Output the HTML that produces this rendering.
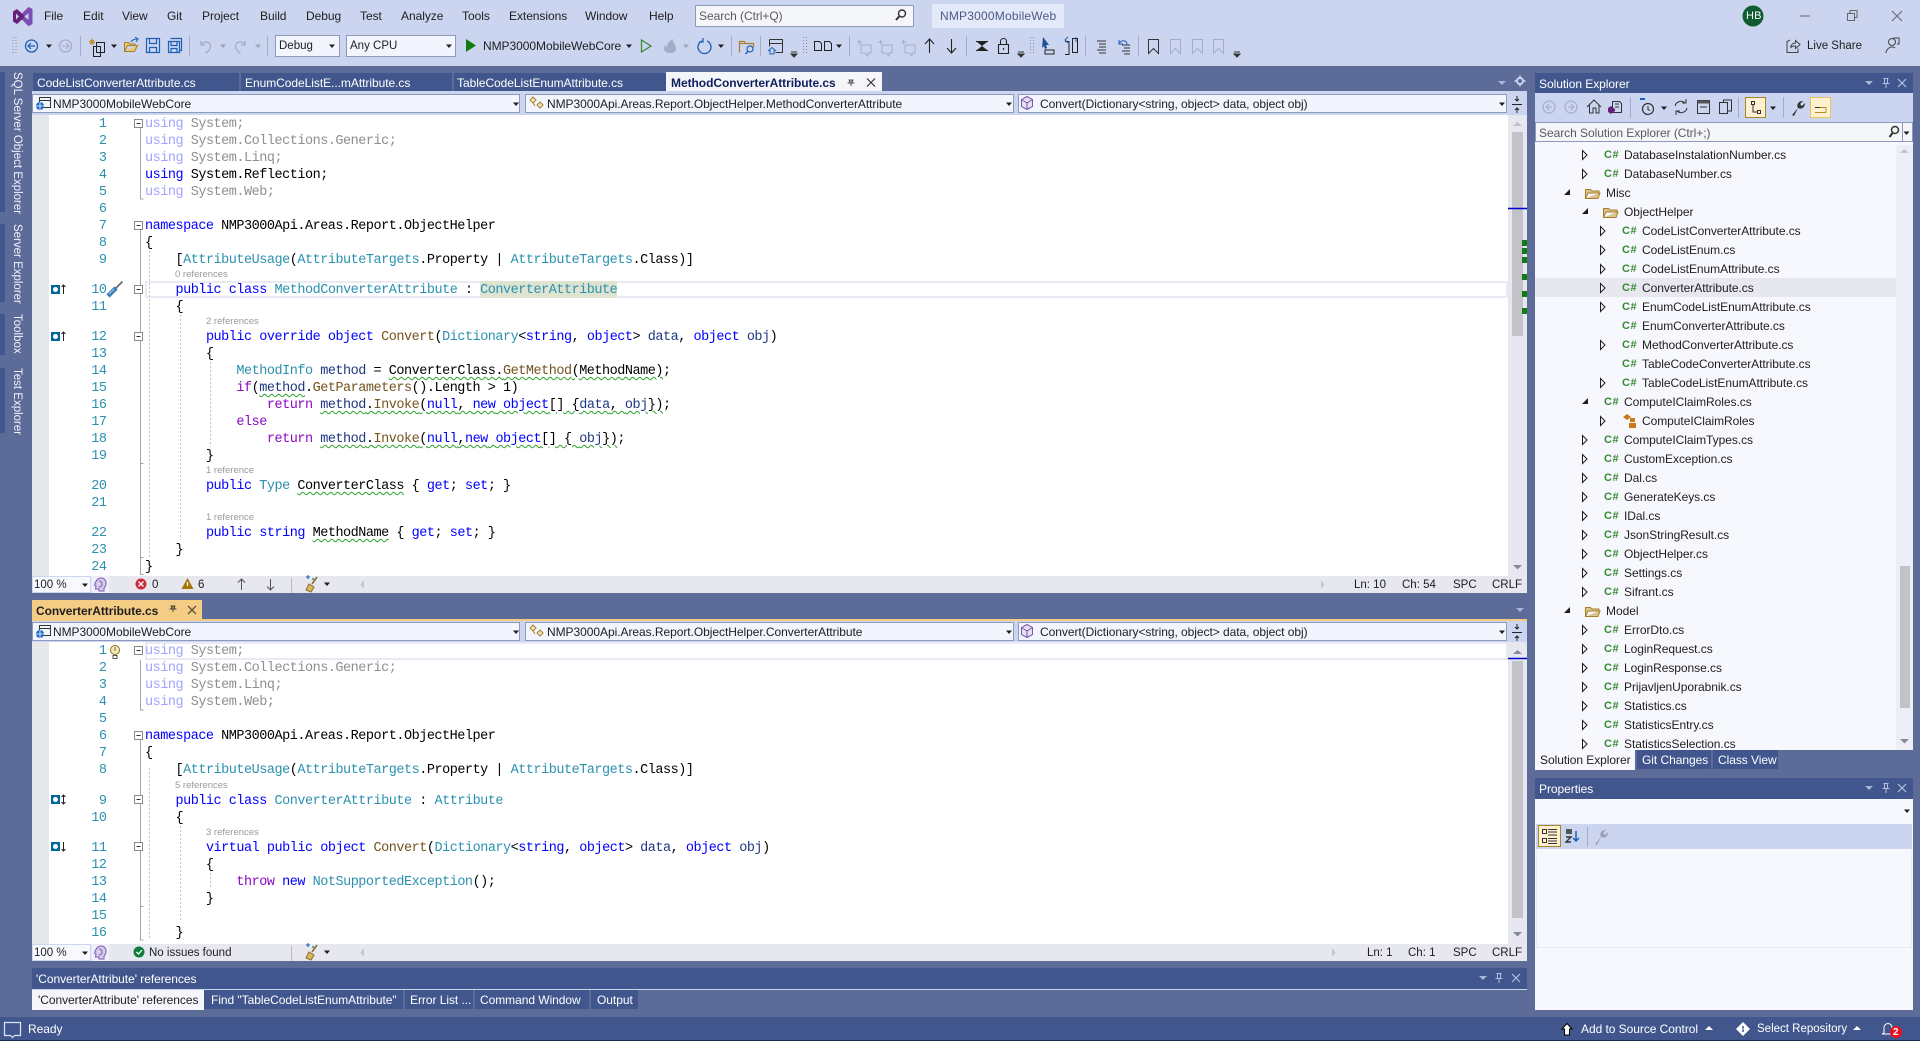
<!DOCTYPE html>
<html><head><meta charset="utf-8"><title>NMP3000MobileWeb</title>
<style>
html,body{margin:0;padding:0;width:1920px;height:1041px;overflow:hidden;background:#5d6b99}
body{position:relative;font-family:"Liberation Sans",sans-serif;font-size:12px;color:#1e1e1e}
.a,.b,.u,.c,.n,.r,.tr{position:absolute}
.a{box-sizing:border-box}
.u{white-space:pre;line-height:16px;height:16px;letter-spacing:-.05px}
.st{font-size:11.5px;letter-spacing:0}
.c,.n{font-family:"Liberation Mono",monospace;font-size:13.5px;letter-spacing:-.485px;line-height:17px;height:17px;white-space:pre;color:#000;margin-top:1px}
.c{left:145px}
.n{left:56px;width:50.5px;text-align:right;color:#2b91af}
.r{font-size:9.5px;color:#9a9a9a;white-space:pre;line-height:12px}
i{font-style:normal}
.k{color:#00f}.t{color:#2b91af}.m{color:#74531f}.p{color:#8f08c4}.v{color:#1f377f}
.fk{color:#a3a3ff}.f{color:#8f8f8f}
.s{text-decoration:underline wavy #2ea02e 1px;text-underline-offset:2px}
.tb{background:#40568d;color:#fff}
.dd{background:#f2f5fd;border:1px solid #8c9ac0}
.tr{left:0;width:378px;height:19px;white-space:pre;line-height:19px;margin-top:1px}
.cs{position:absolute;font-size:11px;font-weight:bold;color:#388a34;letter-spacing:.5px;line-height:19px}
.tx{position:absolute;letter-spacing:-.05px}
.w{color:#fff}
.sb{position:absolute;writing-mode:vertical-rl;color:#f0f2fb;white-space:pre;line-height:12px;left:11px;font-size:11.5px}
svg{position:absolute;left:0;top:0}
</style></head><body>

<!-- chrome -->
<div class="a" style="left:0;top:0;width:1920px;height:66px;background:#ccd5f0"></div>
<div class="a" style="left:695px;top:5px;width:219px;height:22px;background:#f5f6fa;border:1px solid #8c9ac0"></div>
<div class="a" style="left:932px;top:4px;width:132px;height:24px;background:#e3e9f9"></div>
<div class="a dd" style="left:275px;top:35px;width:65px;height:22px"></div>
<div class="a dd" style="left:346px;top:35px;width:110px;height:22px"></div>

<!-- left strip accents -->
<div class="a" style="left:0;top:72px;width:5px;height:140px;background:#40568d"></div>
<div class="a" style="left:0;top:224px;width:5px;height:78px;background:#40568d"></div>
<div class="a" style="left:0;top:314px;width:5px;height:41px;background:#40568d"></div>
<div class="a" style="left:0;top:368px;width:5px;height:65px;background:#40568d"></div>

<!-- doc tabs -->
<div class="a tb" style="left:33px;top:73px;width:206px;height:18px"></div>
<div class="a tb" style="left:241px;top:73px;width:211px;height:18px"></div>
<div class="a tb" style="left:454px;top:73px;width:212px;height:18px"></div>
<div class="a" style="left:666px;top:72px;width:216px;height:20px;background:#f5f6fa"></div>

<!-- pane 1 -->
<div class="a" style="left:32px;top:91px;width:1495px;height:24px;background:#ccd5f0"></div>
<div class="a dd" style="left:32px;top:94px;width:488px;height:19px"></div>
<div class="a dd" style="left:525px;top:94px;width:489px;height:19px"></div>
<div class="a dd" style="left:1018px;top:94px;width:489px;height:19px"></div>
<div class="a" style="left:32px;top:115px;width:17px;height:461px;background:#e6e7e8"></div>
<div class="a" style="left:49px;top:115px;width:1459px;height:461px;background:#fff"></div>
<div class="a" style="left:1508px;top:115px;width:19px;height:461px;background:#e6e7ef"></div>
<div class="a" style="left:1512px;top:132px;width:11px;height:204px;background:#c2c3c9"></div>
<div class="a" style="left:145px;top:281px;width:1363px;height:17px;border:2px solid #eaebf2"></div>
<div class="a" style="left:480px;top:281px;width:137px;height:17px;background:#dfe4d0"></div>
<div class="a" style="left:32px;top:576px;width:1495px;height:17px;background:#e6e7ef"></div>
<div class="a" style="left:32px;top:576px;width:59px;height:17px;background:#f8f9ff;border:1px solid #ccd5f0"></div>
<div class="a" style="left:92px;top:576px;width:17px;height:17px;background:#f0f1f8"></div>

<!-- pane 2 -->
<div class="a" style="left:32px;top:600px;width:170px;height:20px;background:#f5cc84"></div>
<div class="a" style="left:32px;top:619px;width:1495px;height:2px;background:#f5cc84"></div>
<div class="a" style="left:32px;top:621px;width:1495px;height:21px;background:#ccd5f0"></div>
<div class="a dd" style="left:32px;top:622px;width:488px;height:19px"></div>
<div class="a dd" style="left:525px;top:622px;width:489px;height:19px"></div>
<div class="a dd" style="left:1018px;top:622px;width:489px;height:19px"></div>
<div class="a" style="left:32px;top:642px;width:17px;height:302px;background:#e6e7e8"></div>
<div class="a" style="left:49px;top:642px;width:1459px;height:302px;background:#fff"></div>
<div class="a" style="left:1508px;top:642px;width:19px;height:302px;background:#e6e7ef"></div>
<div class="a" style="left:1512px;top:661px;width:11px;height:257px;background:#c2c3c9"></div>
<div class="a" style="left:145px;top:642px;width:1363px;height:18px;border:2px solid #eaebf2"></div>
<div class="a" style="left:32px;top:944px;width:1495px;height:17px;background:#e6e7ef"></div>
<div class="a" style="left:32px;top:944px;width:59px;height:17px;background:#f8f9ff;border:1px solid #ccd5f0"></div>
<div class="a" style="left:92px;top:944px;width:17px;height:17px;background:#f0f1f8"></div>

<!-- bottom tool window -->
<div class="a tb" style="left:32px;top:968px;width:1495px;height:21px"></div>
<div class="a" style="left:32px;top:989px;width:1495px;height:1px;background:#ccd5f0"></div>
<div class="a" style="left:32px;top:990px;width:172px;height:20px;background:#f5f6fa"></div>
<div class="a tb" style="left:204px;top:990px;width:199px;height:19px"></div>
<div class="a tb" style="left:405px;top:990px;width:68px;height:19px"></div>
<div class="a tb" style="left:475px;top:990px;width:114px;height:19px"></div>
<div class="a tb" style="left:591px;top:990px;width:47px;height:19px"></div>

<!-- status bar -->
<div class="a" style="left:0;top:1017px;width:1920px;height:24px;background:#40568d"></div>
<div class="a" style="left:0;top:1040px;width:1920px;height:1px;background:#1d2a4d"></div>

<!-- solution explorer -->
<div class="a tb" style="left:1535px;top:73px;width:378px;height:20px"></div>
<div class="a" style="left:1535px;top:93px;width:378px;height:29px;background:#ccd5f0"></div>
<div class="a" style="left:1535px;top:122px;width:378px;height:20px;background:#f5f6fa;border:1px solid #8c9ac0"></div>
<div class="a" style="left:1535px;top:142px;width:378px;height:608px;background:#f7f8fe"></div>
<div class="a" style="left:1896px;top:145px;width:17px;height:605px;background:#eeeff6"></div>
<div class="a" style="left:1900px;top:566px;width:10px;height:142px;background:#c2c3c9"></div>
<div class="a" style="left:1535px;top:278px;width:361px;height:19px;background:#e6e7ef"></div>
<div class="a" style="left:1745px;top:97px;width:21px;height:21px;background:#fff0d0;border:1px solid #a8842c"></div>
<div class="a" style="left:1810px;top:97px;width:21px;height:21px;background:#fff0d0;border:1px solid #e5c365"></div>
<div class="a" style="left:1535px;top:750px;width:100px;height:20px;background:#f7f8fe"></div>
<div class="a tb" style="left:1637px;top:750px;width:74px;height:19px"></div>
<div class="a tb" style="left:1713px;top:750px;width:65px;height:19px"></div>

<!-- properties -->
<div class="a tb" style="left:1535px;top:778px;width:378px;height:21px"></div>
<div class="a" style="left:1535px;top:799px;width:378px;height:211px;background:#f7f8fe"></div>
<div class="a" style="left:1536px;top:824px;width:376px;height:25px;background:#ccd5f0"></div>
<div class="a" style="left:1536px;top:849px;width:376px;height:99px;border:1px solid #ecedf3;border-top:0"></div>
<div class="a" style="left:1538px;top:825px;width:23px;height:22px;background:#fff0d0;border:1px solid #a8842c"></div>

<svg width="1920" height="1041" viewBox="0 0 1920 1041" fill="none">
<defs>
<symbol id="ca" overflow="visible"><path d="M-3-1.5h6L0 2z" fill="#1e1e1e"/></symbol>
<symbol id="cg" overflow="visible"><path d="M-3-1.5h6L0 2z" fill="#9aa3bc"/></symbol>
<symbol id="cw" overflow="visible"><path d="M-4-2h8L0 2z" fill="#aab6d8"/></symbol>
<symbol id="ex" overflow="visible"><path d="M-1.5 .5 L3 5 L-1.5 9.5Z" fill="#f7f8fe" stroke="#1e1e1e"/></symbol>
<symbol id="ed" overflow="visible"><path d="M6 0 V6 H0Z" fill="#1e1e1e"/></symbol>
<symbol id="fo" overflow="visible"><path d="M.5 11.5V2.5h5l1.5 1.5h7v2M.5 11.5h12.5l2-5.5H3z" fill="#dcc58c" stroke="#a87f28"/></symbol>
<symbol id="bx" overflow="visible"><rect x=".5" y=".5" width="8" height="8" fill="#fff" stroke="#8a8a8a"/><path d="M2.5 4.5h4" stroke="#333"/></symbol>
<symbol id="pin" overflow="visible"><path d="M-2.5-4.5h5M-1.5-4.5v5h3v-5M-3.5.5h7M0 .5v4.5" stroke="#b5c0de"/></symbol>
<symbol id="x" overflow="visible"><path d="M-4-4l8 8M4-4l-8 8" stroke="#b5c0de" stroke-width="1.2"/></symbol>
<symbol id="com" overflow="visible"><path d="M1 4h5M3.500 1.500v5M5 7h10v8h-3v3l-3-3H5z" stroke="#a3adc8"/></symbol>
<symbol id="bm" overflow="visible"><path d="M.5.5h10v14l-5-5-5 5z" stroke="#a3adc8"/></symbol>
<symbol id="hd" overflow="visible"><path d="M-1 7V5h-3.500l.5-3-1.500-1C-4-4-2-6 1-6c3 0 5 2 5 5 0 3-1 4-2 5v3z" fill="#d8ccec" stroke="#7a5bb0"/><path d="M-1-3c2 0 3 1 3 3s-1 3-3 3" stroke="#7a5bb0"/></symbol>
<symbol id="br" overflow="visible"><path d="M11 0L6 7" stroke="#8a6d2a" stroke-width="1.600"/><path d="M3 7l5 3-3 5-5-2z" fill="#d8b860" stroke="#8a6d2a"/><path d="M0 0h4M2-2v4" stroke="#1c5fb4"/><path d="M6 2h2M7 1v2" stroke="#1c5fb4" stroke-width=".8"/></symbol>
</defs>

<!-- logo -->
<path d="M13 11.5 17 9l5 4.5L28.5 7l4 2v15l-4 2L22 19.5 17 24l-4-2.5z" fill="#68217a"/>
<path d="M16 13.5v6l3-3zM24.5 16.5l4 3.2v-6.4z" fill="#ccd5f0"/>
<path d="M22 13.5 28.5 7l4 2v15l-4 2-6.5-6.5 2.5-3z" fill="#865fc5" opacity=".75"/>
<path d="M24.5 16.5l4 3.2v-6.4z" fill="#ccd5f0"/>
<!-- search -->
<circle cx="902" cy="13.5" r="3.5" stroke="#333" stroke-width="1.4"/><path d="M899.5 16l-3.5 4" stroke="#333" stroke-width="2"/>
<!-- toolbar -->
<path d="M13 37v17M16 37v17" stroke="#7f8aa8" stroke-dasharray="1 2"/>
<circle cx="31.5" cy="46" r="6" stroke="#1c5fb4" stroke-width="1.3"/><path d="M35 46h-7M31 43l-3 3 3 3" stroke="#1c5fb4" stroke-width="1.2"/>
<use href="#ca" x="49" y="46"/>
<circle cx="65.5" cy="46" r="6" stroke="#a3adc8" stroke-width="1.3"/><path d="M62 46h7M66 43l3 3-3 3" stroke="#a3adc8"/>
<path d="M80.5 36v20M189.5 36v20M267.5 36v20M731.5 36v20M760.5 36v20M849.5 36v20M966.5 36v20M1085.5 36v20M1138.5 36v20" stroke="#a3adc8"/>
<path d="M90 40l4 4M94 40l-4 4M92 38.5v6.5M89 42h6" stroke="#b98a22"/>
<path d="M96.5 42.5h8v10h-8zM93.5 46.5h7v10h-7z" stroke="#222" />
<use href="#ca" x="114" y="46"/>
<path d="M124.5 51.5v-9h4l1.5 1.5h5v2M124.5 51.5h10l3-6h-10z" fill="#e8c878" stroke="#a87f28"/><path d="M131 42c2-3 4-3 7-3M135 37l3 2-2 3" stroke="#1c5fb4"/>
<path d="M146.5 38.5h13v14h-13zM149.5 38.5v5h7v-5M149.5 52.5v-5h7v5" stroke="#1c5fb4" stroke-width="1.2"/>
<path d="M170.5 38.5h11v12h-2M168.5 41.5h11v11h-11zM171 41.5v4h6v-4M171 52.5v-4h6v4" stroke="#1c5fb4" stroke-width="1.2"/>
<path d="M201 41v4h4M201.5 44.5c3-4 9-3 9 2 0 3-2 4-5 7" stroke="#a3adc8" stroke-width="1.3"/><use href="#cg" x="223" y="46"/>
<path d="M245 41v4h-4M244.5 44.5c-3-4-9-3-9 2 0 3 2 4 5 7" stroke="#a3adc8" stroke-width="1.3"/><use href="#cg" x="258" y="46"/>
<use href="#ca" x="332" y="46"/><use href="#ca" x="449" y="46"/>
<path d="M466 39l10 6.5-10 6.5z" fill="#107c10"/>
<use href="#ca" x="629" y="46"/>
<path d="M641.5 40l9.5 6-9.5 6z" stroke="#388a34" stroke-width="1.3"/>
<path d="M668 53c-4-1-5-5-3-8 1 1 1 2 2 2 0-3 2-6 6-8-1 3 3 5 3 9 0 3-2 5-4 5z" fill="#a3adc8"/>
<use href="#cg" x="686" y="46"/>
<path d="M702 41a6.5 6.5 0 1 0 5 0M703 38v4h-4" stroke="#1c5fb4" stroke-width="1.3"/>
<use href="#ca" x="721" y="46"/>
<path d="M739.5 52.5v-11h5l1 2h8v4" stroke="#a87f28" stroke-width="1.2"/><path d="M739.5 43.5h13" stroke="#a87f28"/><circle cx="750" cy="49" r="3" stroke="#1c5fb4" stroke-width="1.2"/><path d="M748 51.5l-2.5 2.5" stroke="#1c5fb4" stroke-width="1.4"/>
<path d="M769.5 39.5h13v13h-7M769.5 39.5v7M769.5 43.5h13" stroke="#333"/><path d="M768 51l4-3.5 4 3.5M770 50v4h4v-4" stroke="#1c5fb4"/>
<path d="M791 52h6M791 54l3 3 3-3z" stroke="#333" fill="#333"/>
<path d="M803.5 37v17M806.5 37v17" stroke="#7f8aa8" stroke-dasharray="1 2"/>
<path d="M814.5 41.5h5l2 2v7h-7zM824.5 41.5h5l2 2v7h-7z" stroke="#222"/>
<use href="#ca" x="839" y="46"/>
<use href="#com" x="856" y="38"/><use href="#com" x="877" y="38"/><use href="#com" x="900" y="38"/>
<path d="M929.5 53V39M925 44l4.500-5 4.500 5M951.500 39v14M947 48l4.500 5 4.500-5" stroke="#222" stroke-width="1.1"/>
<path d="M976 41.500h12M976 50.500h12" stroke="#222"/><path d="M977 42l5 4 5-4zM977 50l5-4 5 4z" fill="#222"/>
<path d="M998.500 44.500h10v9h-10zM1000.500 44.500v-3c0-4 6-4 6 0v3M1003.500 48v2" stroke="#222" stroke-width="1.1"/>
<path d="M1018 52h6M1018 54l3 3 3-3z" stroke="#333" fill="#333"/>
<path d="M1030.500 37v17M1033.500 37v17" stroke="#7f8aa8" stroke-dasharray="1 2"/>
<path d="M1043 37l6 8h-3l1 3-2 1-1-3-2 2z" fill="#1c4f94"/><path d="M1045 50h9v4h-9z" stroke="#222"/>
<path d="M1065 41.500h4v13h-4M1072.500 38.500h5v14h-5z" stroke="#222"/><path d="M1068 37l-3 3 3 3M1076 37v5" stroke="#1c5fb4"/>
<path d="M1097 41h9M1099 44h7M1099 47h7M1097 50h9M1099 53h7" stroke="#333"/>
<path d="M1122 45h8M1124 48h6M1122 51h8M1124 54h6" stroke="#333"/><path d="M1119 40v4h4M1119.500 43c3-4 9-2 7 2" stroke="#1c5fb4"/>
<path d="M1148.500 39.500h10v14l-5-5-5 5z" stroke="#333"/>
<use href="#bm" x="1170" y="39"/><use href="#bm" x="1192" y="39"/><use href="#bm" x="1213" y="39"/>
<path d="M1234 52h6M1234 54l3 3 3-3z" stroke="#333" fill="#333"/>
<circle cx="1753" cy="16" r="10.500" fill="#0e5c2f"/>
<path d="M1800 16h10" stroke="#666"/>
<path d="M1847.500 13.500h7v7h-7zM1850 13v-2.500h7v7h-2.500" stroke="#666"/>
<path d="M1892 11l10 10M1902 11l-10 10" stroke="#666"/>
<path d="M1790 40l-3 1.500v11h11v-4M1790.500 47c1-3 3-4 5-4v-2.500l4.500 4-4.500 4v-2.500c-2 0-4 0-5 2" stroke="#444"/>
<circle cx="1892" cy="42" r="3.500" stroke="#444"/><path d="M1886 53c0-3 3-6 6-6 1 0 2 0 3 1M1893 38h6v6h-2" stroke="#444"/>
<!-- doc tab decorations -->
<path d="M851 80v5M848.500 80h5M849.500 80v3h3v-3M847.500 83h7M851 83v3" stroke="#555"/>
<path d="M867 78.500l8 8M875 78.500l-8 8" stroke="#333" stroke-width="1.200"/>
<use href="#cw" x="1502" y="83"/>
<circle cx="1520" cy="81" r="3" stroke="#ccd5f0" stroke-width="2"/><path d="M1520 75.500v2M1520 84.500v2M1514.500 81h2M1523.500 81h2" stroke="#ccd5f0" stroke-width="1.400"/>
<!-- dropdown icons pane 1 -->
<path d="M39.500 97.500h11v10h-11zM39.500 100.500h11" stroke="#333"/><circle cx="40" cy="106" r="4" fill="#1c6cc4"/><path d="M36 106h8M40 102v8" stroke="#fff" stroke-width=".8"/>
<path d="M530 100l3-3 3 3-3 3zM537 105l3-3 3 3-3 3zM533 103l2 3" stroke="#a87f28" fill="#f2e4c2"/>
<path d="M1027 96.500l5.500 3v7l-5.500 3-5.500-3v-7zM1027 103v6.500M1027 103l5.500-3.500M1027 103l-5.500-3.500" stroke="#7656a8" fill="#e8e0f5"/>
<use href="#ca" x="516" y="104"/><use href="#ca" x="1009" y="104"/><use href="#ca" x="1502" y="104"/>
<path d="M1512 104.500h10M1517 96v5M1515 99l2 2 2-2M1517 113v-5M1515 110l2-2 2 2" stroke="#222"/>
<!-- dropdown icons pane 2 -->
<path d="M39.500 625.500h11v10h-11zM39.500 628.500h11" stroke="#333"/><circle cx="40" cy="634" r="4" fill="#1c6cc4"/><path d="M36 634h8M40 630v8" stroke="#fff" stroke-width=".8"/>
<path d="M530 628l3-3 3 3-3 3zM537 633l3-3 3 3-3 3zM533 631l2 3" stroke="#a87f28" fill="#f2e4c2"/>
<path d="M1027 624.500l5.500 3v7l-5.500 3-5.500-3v-7zM1027 631v6.500M1027 631l5.500-3.500M1027 631l-5.500-3.500" stroke="#7656a8" fill="#e8e0f5"/>
<use href="#ca" x="516" y="632"/><use href="#ca" x="1009" y="632"/><use href="#ca" x="1502" y="632"/>
<path d="M1512 632.500h10M1517 624v5M1515 627l2 2 2-2M1517 641v-5M1515 638l2-2 2 2" stroke="#222"/>
<path d="M173 606v5M170.500 606h5M171.500 606v3h3v-3M169.500 609h7M173 609v3" stroke="#443"/>
<path d="M188 606l8 8M196 606l-8 8" stroke="#443" stroke-width="1.200"/>
<use href="#cw" x="1520" y="610"/>

<!-- pane1 outline -->
<path d="M140.500 128v71h3M140.500 230v345M140.500 463.500h3M140.500 557.500h3M140.500 574.500h3" stroke="#a5a5a5"/>
<path d="M149.500 251v306M180.500 315v225M210.500 362v85" stroke="#c5c5c5" stroke-dasharray="2 2"/>
<use href="#bx" x="134" y="119"/><use href="#bx" x="134" y="221"/><use href="#bx" x="134" y="285"/><use href="#bx" x="134" y="332"/>
<!-- pane1 glyphs -->
<rect x="51" y="285" width="9" height="9" fill="#00699b"/><circle cx="55.500" cy="289.500" r="2.500" fill="#fff"/><path d="M63.500 294v-9M61.500 287l2-2 2 2" stroke="#222"/>
<rect x="51" y="332" width="9" height="9" fill="#00699b"/><circle cx="55.500" cy="336.500" r="2.500" fill="#fff"/><path d="M63.500 341v-9M61.500 334l2-2 2 2" stroke="#222"/>
<path d="M115 289l7.500-7.500" stroke="#666" stroke-width="1.600"/><path d="M108 296l8-8" stroke="#3f7eb6" stroke-width="4.500"/><path d="M109 294l5-5" stroke="#a7cbe6"/>
<!-- scrollbar pane 1 -->
<path d="M1513 126l4.500-4 4.500 4z" fill="#c2c3c9"/><path d="M1513 565l4.500 4.500 4.500-4.500z" fill="#868999"/>
<path d="M1508 208.500h19" stroke="#00c" stroke-width="1.500"/>
<path d="M1522 240h5v6h-5zM1522 248h5v6h-5zM1522 257h5v6h-5zM1522 274h5v6h-5zM1522 291h5v6h-5zM1522 308h5v6h-5z" fill="#107c10"/>
<!-- pane1 statusbar -->
<use href="#ca" x="85" y="585"/>
<use href="#hd" x="100" y="584"/>
<circle cx="141" cy="584" r="5.500" fill="#d0283a"/><path d="M138.500 581.500l5 5M143.500 581.500l-5 5" stroke="#fff" stroke-width="1.300"/>
<path d="M187.500 578l6 11h-12z" fill="#a87408"/><path d="M187.500 582v4" stroke="#fff" stroke-width="1.300"/>
<path d="M241.500 590v-11M238 582.500l3.500-3.500 3.500 3.500M270.500 579v11M267 586.500l3.500 3.500 3.500-3.500" stroke="#555"/>
<path d="M291.500 578v15" stroke="#bbb"/>
<use href="#br" x="306" y="577"/>
<use href="#ca" x="327" y="584"/>
<path d="M364 580l-3.500 4.500 3.500 4.500z" fill="#c4c6d0"/><path d="M1321 580l3.500 4.500-3.500 4.500z" fill="#c4c6d0"/>

<!-- pane2 outline -->
<path d="M140.500 660v50h3M140.500 740v200h3M140.500 906.500h3" stroke="#a5a5a5"/>
<path d="M149.500 768v172M180.500 826v96M210.500 873v16" stroke="#c5c5c5" stroke-dasharray="2 2"/>
<use href="#bx" x="134" y="646"/><use href="#bx" x="134" y="731"/><use href="#bx" x="134" y="795"/><use href="#bx" x="134" y="842"/>
<rect x="51" y="795" width="9" height="9" fill="#00699b"/><circle cx="55.500" cy="799.500" r="2.500" fill="#fff"/><path d="M63.500 795v9M61.500 797l2-2 2 2M61.500 802l2 2 2-2" stroke="#222"/>
<rect x="51" y="842" width="9" height="9" fill="#00699b"/><circle cx="55.500" cy="846.500" r="2.500" fill="#fff"/><path d="M63.500 842v9M61.500 849l2 2 2-2" stroke="#222"/>
<circle cx="115" cy="650" r="4.500" fill="#f4e7bd" stroke="#8a7320"/><path d="M113 655.500h4v3h-4z" stroke="#555"/><path d="M115 647v4" stroke="#8a7320"/>
<path d="M1513 654l4.500-4 4.500 4z" fill="#868999"/><path d="M1513 932l4.500 4.500 4.500-4.500z" fill="#868999"/>
<path d="M1508 658.500h19" stroke="#00c" stroke-width="1.500"/>
<use href="#ca" x="85" y="953"/>
<use href="#hd" x="100" y="952"/>
<circle cx="139" cy="952" r="5.500" fill="#107c3c"/><path d="M136.500 952l2 2 3.500-4" stroke="#fff" stroke-width="1.300"/>
<path d="M291.500 946v15" stroke="#bbb"/>
<use href="#br" x="306" y="945"/>
<use href="#ca" x="327" y="952"/>
<path d="M364 948l-3.500 4.500 3.500 4.500z" fill="#c4c6d0"/><path d="M1332 948l3.500 4.500-3.500 4.500z" fill="#c4c6d0"/>

<!-- bottom window buttons -->
<use href="#cw" x="1483" y="978"/><use href="#pin" x="1499" y="978"/><use href="#x" x="1516" y="978"/>

<!-- status bar icons -->
<path d="M4.500 1022.500h16v13h-6l-2 2-2-2h-6z" stroke="#dfe4f5" stroke-width="1.200"/>
<path d="M1567 1023.500l5 5.500h-2.500v6h-5v-6H1562z" fill="#fff" stroke="#000"/>
<path d="M1743 1022l7 7-7 7-7-7z" fill="#fff"/><circle cx="1743" cy="1027" r="1" fill="#40568d"/><circle cx="1743" cy="1031" r="1" fill="#40568d"/><path d="M1743 1027v4" stroke="#40568d"/>
<path d="M1705 1030h8l-4-4zM1853 1030h8l-4-4z" fill="#fff"/>
<path d="M1884 1033v-5c0-6 8-6 8 0v5l2 1h-12z" stroke="#fff"/><circle cx="1896" cy="1032" r="6" fill="#e81123"/>

<!-- SE title -->
<use href="#cw" x="1869" y="83"/><use href="#pin" x="1886" y="83"/><use href="#x" x="1902" y="83"/>
<circle cx="1549" cy="107" r="6" stroke="#a3adc8" stroke-width="1.200"/><path d="M1552 107h-6M1549 104l-3 3 3 3" stroke="#a3adc8"/>
<circle cx="1571" cy="107" r="6" stroke="#a3adc8" stroke-width="1.200"/><path d="M1568 107h6M1571 104l3 3-3 3" stroke="#a3adc8"/>
<path d="M1587 107l7-7 7 7M1589.500 105v8h3.500v-5h3v5h3v-8" stroke="#333"/>
<path d="M1612.500 101.500h7l2 2v9h-9z" stroke="#333"/><path d="M1615 104h4M1615 107h4" stroke="#333"/><path d="M1608 108l3-2 4 3v2l-4 3-3-2z" fill="#68217a"/>
<path d="M1630.500 97v21M1738.500 97v21M1783.500 97v21" stroke="#a3adc8"/>
<circle cx="1648" cy="109" r="5.500" stroke="#333" stroke-width="1.200"/><path d="M1648 106v3.500l2 1" stroke="#333"/><path d="M1640 98h5v2h-5z" fill="#1c5fb4"/>
<use href="#ca" x="1664" y="108"/>
<path d="M1675 106a6 6 0 0 1 10-3M1687 108a6 6 0 0 1-10 3M1686 99v4h-4M1676 115v-4h4" stroke="#333"/>
<path d="M1697.500 100.500h12v13h-12zM1700 107h7" stroke="#333"/><path d="M1697.500 100.500h12v3h-12z" fill="#555"/>
<path d="M1719.500 102.500h8v11h-8zM1723.500 102.500v-2.500h8v11h-4" stroke="#333"/>
<path d="M1751.500 101.500h3v3h-3zM1757.500 110.500h3v3h-3zM1753 105v7h4" stroke="#333"/>
<use href="#ca" x="1773" y="108"/>
<path d="M1792 115l6-7c-2-4 1-7 5-7l-3 3 2 2 3-3c0 4-3 7-7 5l-4 8z" fill="#333"/>
<path d="M1815 112.500h11M1826 112.500v-5h-6" stroke="#b98a22"/><path d="M1815 107.500h5" stroke="#333"/>
<circle cx="1895" cy="130" r="3.500" stroke="#333" stroke-width="1.500"/><path d="M1892.500 133l-3 4" stroke="#333" stroke-width="2"/>
<path d="M1902.500 122v20" stroke="#8c9ac0"/><use href="#ca" x="1906.500" y="133"/>
<path d="M1900 153l4.500-4 4.500 4z" fill="#c2c3c9"/><path d="M1900 739l4.500 4.500 4.500-4.500z" fill="#868999"/>

<!-- Properties -->
<use href="#cw" x="1869" y="788"/><use href="#pin" x="1886" y="788"/><use href="#x" x="1902" y="788"/>
<use href="#ca" x="1907" y="811"/>
<path d="M1542.500 829.500h4v4h-4zM1542.500 838.500h4v4h-4zM1548 829.500h9M1548 832h9M1548 835h9M1548 838.500h9M1548 841h9M1548 843.500h9" stroke="#333"/>
<path d="M1566 829h6v5h-6z" fill="#555"/><path d="M1566 837h5l-5 5h5" stroke="#333" stroke-width="1.400"/>
<path d="M1576 831v10M1573 838l3 3 3-3" stroke="#1c5fb4" stroke-width="1.500"/>
<path d="M1587.500 827v20" stroke="#a3adc8"/>
<path d="M1595 844l6-7c-2-4 1-7 5-7l-3 3 2 2 3-3c0 4-3 7-7 5l-4 8z" fill="#9aa0b4"/>
</svg>

<!-- menu -->
<div class="u" style="left:44px;top:8px">File</div>
<div class="u" style="left:83px;top:8px">Edit</div>
<div class="u" style="left:122px;top:8px">View</div>
<div class="u" style="left:167px;top:8px">Git</div>
<div class="u" style="left:202px;top:8px">Project</div>
<div class="u" style="left:260px;top:8px">Build</div>
<div class="u" style="left:306px;top:8px">Debug</div>
<div class="u" style="left:360px;top:8px">Test</div>
<div class="u" style="left:401px;top:8px">Analyze</div>
<div class="u" style="left:462px;top:8px">Tools</div>
<div class="u" style="left:509px;top:8px">Extensions</div>
<div class="u" style="left:585px;top:8px">Window</div>
<div class="u" style="left:649px;top:8px">Help</div>
<div class="u" style="left:699px;top:8px;color:#5a5a5a">Search (Ctrl+Q)</div>
<div class="u" style="left:940px;top:8px;color:#4d5a80;letter-spacing:.2px">NMP3000MobileWeb</div>
<div class="u" style="left:1746px;top:8px;color:#fff;font-size:11px;letter-spacing:.2px">HB</div>
<div class="u st" style="left:279px;top:38px">Debug</div>
<div class="u st" style="left:350px;top:38px">Any CPU</div>
<div class="u" style="left:483px;top:38px">NMP3000MobileWebCore</div>
<div class="u st" style="left:1807px;top:38px">Live Share</div>

<!-- left strip -->
<div class="sb" style="top:72px">SQL Server Object Explorer</div>
<div class="sb" style="top:224px">Server Explorer</div>
<div class="sb" style="top:314px">Toolbox</div>
<div class="sb" style="top:368px">Test Explorer</div>

<!-- tabs -->
<div class="u w" style="left:37px;top:75px">CodeListConverterAttribute.cs</div>
<div class="u w" style="left:245px;top:75px">EnumCodeListE...mAttribute.cs</div>
<div class="u w" style="left:457px;top:75px">TableCodeListEnumAttribute.cs</div>
<div class="u" style="left:671px;top:75px;font-weight:bold;color:#0e1f5e">MethodConverterAttribute.cs</div>
<div class="u" style="left:53px;top:96px">NMP3000MobileWebCore</div>
<div class="u" style="left:547px;top:96px">NMP3000Api.Areas.Report.ObjectHelper.MethodConverterAttribute</div>
<div class="u" style="left:1040px;top:96px">Convert(Dictionary&lt;string, object&gt; data, object obj)</div>
<div class="u" style="left:36px;top:603px;font-weight:bold">ConverterAttribute.cs</div>
<div class="u" style="left:53px;top:624px">NMP3000MobileWebCore</div>
<div class="u" style="left:547px;top:624px">NMP3000Api.Areas.Report.ObjectHelper.ConverterAttribute</div>
<div class="u" style="left:1040px;top:624px">Convert(Dictionary&lt;string, object&gt; data, object obj)</div>

<!-- pane 1 line numbers -->
<div class="n" style="top:115px">1</div><div class="n" style="top:132px">2</div><div class="n" style="top:149px">3</div><div class="n" style="top:166px">4</div><div class="n" style="top:183px">5</div><div class="n" style="top:200px">6</div><div class="n" style="top:217px">7</div><div class="n" style="top:234px">8</div><div class="n" style="top:251px">9</div><div class="n" style="top:281px">10</div><div class="n" style="top:298px">11</div><div class="n" style="top:328px">12</div><div class="n" style="top:345px">13</div><div class="n" style="top:362px">14</div><div class="n" style="top:379px">15</div><div class="n" style="top:396px">16</div><div class="n" style="top:413px">17</div><div class="n" style="top:430px">18</div><div class="n" style="top:447px">19</div><div class="n" style="top:477px">20</div><div class="n" style="top:494px">21</div><div class="n" style="top:524px">22</div><div class="n" style="top:541px">23</div><div class="n" style="top:558px">24</div>

<!-- pane 1 code -->
<div class="c" style="top:115px"><i class="fk">using</i><i class="f"> System;</i></div>
<div class="c" style="top:132px"><i class="fk">using</i><i class="f"> System.Collections.Generic;</i></div>
<div class="c" style="top:149px"><i class="fk">using</i><i class="f"> System.Linq;</i></div>
<div class="c" style="top:166px"><i class="k">using</i> System.Reflection;</div>
<div class="c" style="top:183px"><i class="fk">using</i><i class="f"> System.Web;</i></div>
<div class="c" style="top:217px"><i class="k">namespace</i> NMP3000Api.Areas.Report.ObjectHelper</div>
<div class="c" style="top:234px">{</div>
<div class="c" style="top:251px">    [<i class="t">AttributeUsage</i>(<i class="t">AttributeTargets</i>.Property | <i class="t">AttributeTargets</i>.Class)]</div>
<div class="r" style="left:175px;top:269px">0 references</div>
<div class="c" style="top:281px">    <i class="k">public</i> <i class="k">class</i> <i class="t">MethodConverterAttribute</i> : <i class="t">ConverterAttribute</i></div>
<div class="c" style="top:298px">    {</div>
<div class="r" style="left:206px;top:316px">2 references</div>
<div class="c" style="top:328px">        <i class="k">public</i> <i class="k">override</i> <i class="k">object</i> <i class="m">Convert</i>(<i class="t">Dictionary</i>&lt;<i class="k">string</i>, <i class="k">object</i>&gt; <i class="v">data</i>, <i class="k">object</i> <i class="v">obj</i>)</div>
<div class="c" style="top:345px">        {</div>
<div class="c" style="top:362px">            <i class="t">MethodInfo</i> <i class="v">method</i> = <i class="s">ConverterClass.<i class="m">GetMethod</i>(MethodName)</i>;</div>
<div class="c" style="top:379px">            <i class="p">if</i>(<i class="s v">method</i>.<i class="m">GetParameters</i>().Length &gt; 1)</div>
<div class="c" style="top:396px">                <i class="p">return</i> <i class="s"><i class="v">method</i>.<i class="m">Invoke</i>(<i class="k">null</i>, <i class="k">new</i> <i class="k">object</i>[] {<i class="v">data</i>, <i class="v">obj</i>})</i>;</div>
<div class="c" style="top:413px">            <i class="p">else</i></div>
<div class="c" style="top:430px">                <i class="p">return</i> <i class="s"><i class="v">method</i>.<i class="m">Invoke</i>(<i class="k">null</i>,<i class="k">new</i> <i class="k">object</i>[] { <i class="v">obj</i>})</i>;</div>
<div class="c" style="top:447px">        }</div>
<div class="r" style="left:206px;top:465px">1 reference</div>
<div class="c" style="top:477px">        <i class="k">public</i> <i class="t">Type</i> <i class="s">ConverterClass</i> { <i class="k">get</i>; <i class="k">set</i>; }</div>
<div class="r" style="left:206px;top:512px">1 reference</div>
<div class="c" style="top:524px">        <i class="k">public</i> <i class="k">string</i> <i class="s">MethodName</i> { <i class="k">get</i>; <i class="k">set</i>; }</div>
<div class="c" style="top:541px">    }</div>
<div class="c" style="top:558px">}</div>

<!-- pane 1 status -->
<div class="u st" style="left:34px;top:577px">100 %</div>
<div class="u st" style="left:152px;top:577px">0</div>
<div class="u st" style="left:198px;top:577px">6</div>
<div class="u st" style="left:1354px;top:577px">Ln: 10</div>
<div class="u st" style="left:1402px;top:577px">Ch: 54</div>
<div class="u st" style="left:1453px;top:577px">SPC</div>
<div class="u st" style="left:1492px;top:577px">CRLF</div>

<!-- pane 2 line numbers -->
<div class="n" style="top:642px">1</div><div class="n" style="top:659px">2</div><div class="n" style="top:676px">3</div><div class="n" style="top:693px">4</div><div class="n" style="top:710px">5</div><div class="n" style="top:727px">6</div><div class="n" style="top:744px">7</div><div class="n" style="top:761px">8</div><div class="n" style="top:792px">9</div><div class="n" style="top:809px">10</div><div class="n" style="top:839px">11</div><div class="n" style="top:856px">12</div><div class="n" style="top:873px">13</div><div class="n" style="top:890px">14</div><div class="n" style="top:907px">15</div><div class="n" style="top:924px">16</div>

<!-- pane 2 code -->
<div class="c" style="top:642px"><i class="fk">using</i><i class="f"> System;</i></div>
<div class="c" style="top:659px"><i class="fk">using</i><i class="f"> System.Collections.Generic;</i></div>
<div class="c" style="top:676px"><i class="fk">using</i><i class="f"> System.Linq;</i></div>
<div class="c" style="top:693px"><i class="fk">using</i><i class="f"> System.Web;</i></div>
<div class="c" style="top:727px"><i class="k">namespace</i> NMP3000Api.Areas.Report.ObjectHelper</div>
<div class="c" style="top:744px">{</div>
<div class="c" style="top:761px">    [<i class="t">AttributeUsage</i>(<i class="t">AttributeTargets</i>.Property | <i class="t">AttributeTargets</i>.Class)]</div>
<div class="r" style="left:175px;top:780px">5 references</div>
<div class="c" style="top:792px">    <i class="k">public</i> <i class="k">class</i> <i class="t">ConverterAttribute</i> : <i class="t">Attribute</i></div>
<div class="c" style="top:809px">    {</div>
<div class="r" style="left:206px;top:827px">3 references</div>
<div class="c" style="top:839px">        <i class="k">virtual</i> <i class="k">public</i> <i class="k">object</i> <i class="m">Convert</i>(<i class="t">Dictionary</i>&lt;<i class="k">string</i>, <i class="k">object</i>&gt; <i class="v">data</i>, <i class="k">object</i> <i class="v">obj</i>)</div>
<div class="c" style="top:856px">        {</div>
<div class="c" style="top:873px">            <i class="p">throw</i> <i class="k">new</i> <i class="t">NotSupportedException</i>();</div>
<div class="c" style="top:890px">        }</div>
<div class="c" style="top:924px">    }</div>

<!-- pane 2 status -->
<div class="u st" style="left:34px;top:945px">100 %</div>
<div class="u st" style="left:149px;top:945px">No issues found</div>
<div class="u st" style="left:1367px;top:945px">Ln: 1</div>
<div class="u st" style="left:1408px;top:945px">Ch: 1</div>
<div class="u st" style="left:1453px;top:945px">SPC</div>
<div class="u st" style="left:1492px;top:945px">CRLF</div>

<!-- bottom tool window text -->
<div class="u w" style="left:36px;top:971px">'ConverterAttribute' references</div>
<div class="u" style="left:38px;top:992px">'ConverterAttribute' references</div>
<div class="u w" style="left:211px;top:992px">Find "TableCodeListEnumAttribute"</div>
<div class="u w" style="left:410px;top:992px">Error List ...</div>
<div class="u w" style="left:480px;top:992px">Command Window</div>
<div class="u w" style="left:597px;top:992px">Output</div>
<div class="u w" style="left:28px;top:1021px">Ready</div>
<div class="u w" style="left:1581px;top:1021px">Add to Source Control</div>
<div class="u w st" style="left:1757px;top:1021px">Select Repository</div>
<div class="u w" style="left:1893px;top:1025px;font-size:10px;font-weight:bold">2</div>

<!-- solution explorer text -->
<div class="u w" style="left:1539px;top:76px">Solution Explorer</div>
<div class="u" style="left:1539px;top:125px;color:#5a5a5a">Search Solution Explorer (Ctrl+;)</div>
<div class="a" style="left:1535px;top:145px;width:361px;height:605px;overflow:hidden">
<svg width="361" height="605" viewBox="1535 145 361 605" fill="none">
<use href="#ex" x="1584" y="150"/><use href="#ex" x="1584" y="169"/><use href="#ed" x="1564" y="189"/><use href="#fo" x="1585" y="187"/><use href="#ed" x="1582" y="208"/><use href="#fo" x="1603" y="206"/>
<use href="#ex" x="1602" y="226"/><use href="#ex" x="1602" y="245"/><use href="#ex" x="1602" y="264"/><use href="#ex" x="1602" y="283"/><use href="#ex" x="1602" y="302"/><use href="#ex" x="1602" y="340"/><use href="#ex" x="1602" y="378"/>
<use href="#ed" x="1582" y="398"/><use href="#ex" x="1602" y="416"/>
<path d="M1623 417l4-3 4 3-4 3zM1629 423h7v5h-7zM1630 418h5v4h-5z" fill="#c9781a"/>
<use href="#ex" x="1584" y="435"/><use href="#ex" x="1584" y="454"/><use href="#ex" x="1584" y="473"/><use href="#ex" x="1584" y="492"/><use href="#ex" x="1584" y="511"/><use href="#ex" x="1584" y="530"/><use href="#ex" x="1584" y="549"/><use href="#ex" x="1584" y="568"/><use href="#ex" x="1584" y="587"/>
<use href="#ed" x="1564" y="607"/><use href="#fo" x="1585" y="605"/>
<use href="#ex" x="1584" y="625"/><use href="#ex" x="1584" y="644"/><use href="#ex" x="1584" y="663"/><use href="#ex" x="1584" y="682"/><use href="#ex" x="1584" y="701"/><use href="#ex" x="1584" y="720"/><use href="#ex" x="1584" y="739"/>
</svg>
<div class="tr" style="top:0"><span class="cs" style="left:69px">C#</span><span class="tx" style="left:89px">DatabaseInstalationNumber.cs</span></div>
<div class="tr" style="top:19px"><span class="cs" style="left:69px">C#</span><span class="tx" style="left:89px">DatabaseNumber.cs</span></div>
<div class="tr" style="top:38px"><span class="tx" style="left:71px">Misc</span></div>
<div class="tr" style="top:57px"><span class="tx" style="left:89px">ObjectHelper</span></div>
<div class="tr" style="top:76px"><span class="cs" style="left:87px">C#</span><span class="tx" style="left:107px">CodeListConverterAttribute.cs</span></div>
<div class="tr" style="top:95px"><span class="cs" style="left:87px">C#</span><span class="tx" style="left:107px">CodeListEnum.cs</span></div>
<div class="tr" style="top:114px"><span class="cs" style="left:87px">C#</span><span class="tx" style="left:107px">CodeListEnumAttribute.cs</span></div>
<div class="tr" style="top:133px"><span class="cs" style="left:87px">C#</span><span class="tx" style="left:107px">ConverterAttribute.cs</span></div>
<div class="tr" style="top:152px"><span class="cs" style="left:87px">C#</span><span class="tx" style="left:107px">EnumCodeListEnumAttribute.cs</span></div>
<div class="tr" style="top:171px"><span class="cs" style="left:87px">C#</span><span class="tx" style="left:107px">EnumConverterAttribute.cs</span></div>
<div class="tr" style="top:190px"><span class="cs" style="left:87px">C#</span><span class="tx" style="left:107px">MethodConverterAttribute.cs</span></div>
<div class="tr" style="top:209px"><span class="cs" style="left:87px">C#</span><span class="tx" style="left:107px">TableCodeConverterAttribute.cs</span></div>
<div class="tr" style="top:228px"><span class="cs" style="left:87px">C#</span><span class="tx" style="left:107px">TableCodeListEnumAttribute.cs</span></div>
<div class="tr" style="top:247px"><span class="cs" style="left:69px">C#</span><span class="tx" style="left:89px">ComputeIClaimRoles.cs</span></div>
<div class="tr" style="top:266px"><span class="tx" style="left:107px">ComputeIClaimRoles</span></div>
<div class="tr" style="top:285px"><span class="cs" style="left:69px">C#</span><span class="tx" style="left:89px">ComputeIClaimTypes.cs</span></div>
<div class="tr" style="top:304px"><span class="cs" style="left:69px">C#</span><span class="tx" style="left:89px">CustomException.cs</span></div>
<div class="tr" style="top:323px"><span class="cs" style="left:69px">C#</span><span class="tx" style="left:89px">Dal.cs</span></div>
<div class="tr" style="top:342px"><span class="cs" style="left:69px">C#</span><span class="tx" style="left:89px">GenerateKeys.cs</span></div>
<div class="tr" style="top:361px"><span class="cs" style="left:69px">C#</span><span class="tx" style="left:89px">IDal.cs</span></div>
<div class="tr" style="top:380px"><span class="cs" style="left:69px">C#</span><span class="tx" style="left:89px">JsonStringResult.cs</span></div>
<div class="tr" style="top:399px"><span class="cs" style="left:69px">C#</span><span class="tx" style="left:89px">ObjectHelper.cs</span></div>
<div class="tr" style="top:418px"><span class="cs" style="left:69px">C#</span><span class="tx" style="left:89px">Settings.cs</span></div>
<div class="tr" style="top:437px"><span class="cs" style="left:69px">C#</span><span class="tx" style="left:89px">Sifrant.cs</span></div>
<div class="tr" style="top:456px"><span class="tx" style="left:71px">Model</span></div>
<div class="tr" style="top:475px"><span class="cs" style="left:69px">C#</span><span class="tx" style="left:89px">ErrorDto.cs</span></div>
<div class="tr" style="top:494px"><span class="cs" style="left:69px">C#</span><span class="tx" style="left:89px">LoginRequest.cs</span></div>
<div class="tr" style="top:513px"><span class="cs" style="left:69px">C#</span><span class="tx" style="left:89px">LoginResponse.cs</span></div>
<div class="tr" style="top:532px"><span class="cs" style="left:69px">C#</span><span class="tx" style="left:89px">PrijavljenUporabnik.cs</span></div>
<div class="tr" style="top:551px"><span class="cs" style="left:69px">C#</span><span class="tx" style="left:89px">Statistics.cs</span></div>
<div class="tr" style="top:570px"><span class="cs" style="left:69px">C#</span><span class="tx" style="left:89px">StatisticsEntry.cs</span></div>
<div class="tr" style="top:589px"><span class="cs" style="left:69px">C#</span><span class="tx" style="left:89px">StatisticsSelection.cs</span></div>
</div>
<div class="u" style="left:1540px;top:752px">Solution Explorer</div>
<div class="u w" style="left:1642px;top:752px">Git Changes</div>
<div class="u w" style="left:1718px;top:752px">Class View</div>
<div class="u w" style="left:1539px;top:781px">Properties</div>
</body></html>
